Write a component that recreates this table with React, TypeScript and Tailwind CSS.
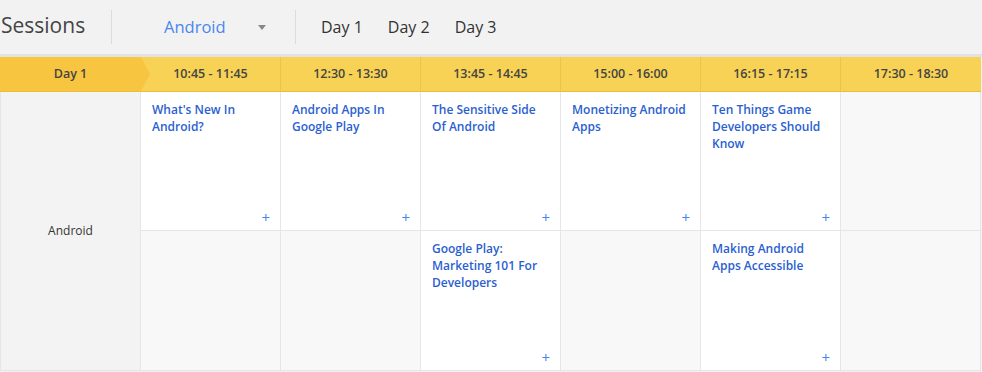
import React from "react";

const slots = ["10:45 - 11:45", "12:30 - 13:30", "13:45 - 14:45", "15:00 - 16:00", "16:15 - 17:15", "17:30 - 18:30"];

const rows: (string | null)[][] = [
  ["What's New In Android?", "Android Apps In Google Play", "The Sensitive Side Of Android", "Monetizing Android Apps", "Ten Things Game Developers Should Know", null],
  [null, null, "Google Play: Marketing 101 For Developers", null, "Making Android Apps Accessible", null],
];

function Cell({ title }: { title: string | null }) {
  if (!title) {
    return <div className="h-full bg-[#f8f8f8] border-r border-b border-[#e6e6e6]" />;
  }
  return (
    <div className="relative h-full bg-white border-r border-b border-[#e6e6e6] pl-[11px] pr-[8px] pt-[9px]">
      <a href="#" className="block text-[12px] leading-[17px] font-semibold text-[#2b5fd0]">
        {title}
      </a>
      <span className="absolute right-[10px] bottom-[5px] text-[15px] leading-none text-[#4a86f0]">+</span>
    </div>
  );
}

export default function App() {
  return (
    <div className="w-[982px] h-[372px] bg-[#f2f2f2] overflow-hidden" style={{ fontFamily: "'Open Sans', sans-serif" }}>
      <header className="h-[54px] flex items-center border-b-[3px] border-[#e2e2e2] box-content">
        <h1 className="text-[21px] text-[#444] pl-[1px] w-[111px] pb-[3px]">Sessions</h1>
        <div className="h-[34px] w-px bg-[#dcdcdc]" />
        <div className="w-[183px] flex items-center pl-[52px] pr-[29px] justify-between">
          <span className="text-[16.5px] text-[#4a86f0]">Android</span>
          <span className="w-0 h-0 border-l-[4px] border-r-[4px] border-t-[5px] border-l-transparent border-r-transparent border-t-[#888] mt-[1px]" />
        </div>
        <div className="h-[34px] w-px bg-[#dcdcdc]" />
        <nav className="flex gap-[25px] pl-[25px] text-[16px] text-[#333]">
          <span>Day 1</span>
          <span>Day 2</span>
          <span>Day 3</span>
        </nav>
      </header>

      <div className="grid grid-cols-[141px_repeat(6,140px)] grid-rows-[35px_139px_140px]">
        <div className="relative z-10 bg-[#f8c540] border-b border-[#e9bd3e] flex items-center justify-center text-[12.5px] font-semibold text-[#444]">
          Day 1
          <span className="absolute left-full top-0 w-0 h-0 border-t-[17px] border-b-[17px] border-l-[9px] border-t-transparent border-b-transparent border-l-[#f8c540]" />
        </div>
        {slots.map((s, i) => (
          <div
            key={s}
            className={`bg-[#f8d255] border-b border-[#e9bd3e] flex items-center justify-center text-[12.5px] font-semibold text-[#444] ${i < 5 ? "border-r border-r-[#ecc44a]" : ""}`}
          >
            {s}
          </div>
        ))}

        <div className="row-span-2 bg-[#f3f3f3] border-l border-b border-r border-[#e6e6e6] flex items-center justify-center text-[12px] font-medium text-[#333]">
          Android
        </div>
        {rows[0].map((t, i) => (
          <Cell key={"a" + i} title={t} />
        ))}
        {rows[1].map((t, i) => (
          <Cell key={"b" + i} title={t} />
        ))}
      </div>
    </div>
  );
}
